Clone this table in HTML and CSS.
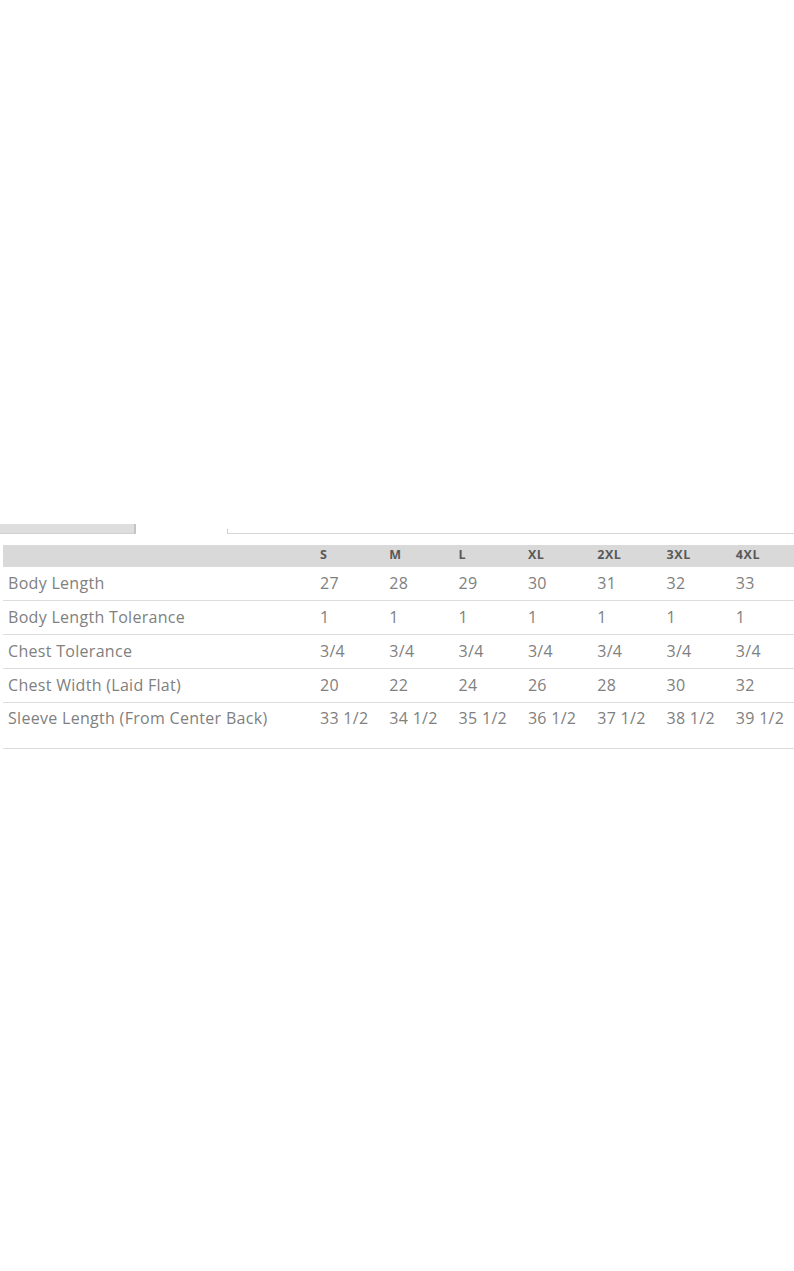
FILE: index.html
```html
<!DOCTYPE html>
<html>
<head>
<meta charset="utf-8">
<link rel="stylesheet" href="styles.css">
</head>
<body>
<div class="page">
  <div class="tabs">
    <div class="tab-active"></div>
    <div class="tab-gap"></div>
    <div class="tab-line"></div>
  </div>
  <div class="chart">
    <div class="row head">
      <div class="label"></div>
      <div class="cell">S</div><div class="cell">M</div><div class="cell">L</div><div class="cell">XL</div><div class="cell">2XL</div><div class="cell">3XL</div><div class="cell">4XL</div>
    </div>
    <div class="row">
      <div class="label">Body Length</div>
      <div class="cell">27</div><div class="cell">28</div><div class="cell">29</div><div class="cell">30</div><div class="cell">31</div><div class="cell">32</div><div class="cell">33</div>
    </div>
    <div class="row">
      <div class="label">Body Length Tolerance</div>
      <div class="cell">1</div><div class="cell">1</div><div class="cell">1</div><div class="cell">1</div><div class="cell">1</div><div class="cell">1</div><div class="cell">1</div>
    </div>
    <div class="row">
      <div class="label">Chest Tolerance</div>
      <div class="cell">3/4</div><div class="cell">3/4</div><div class="cell">3/4</div><div class="cell">3/4</div><div class="cell">3/4</div><div class="cell">3/4</div><div class="cell">3/4</div>
    </div>
    <div class="row">
      <div class="label">Chest Width (Laid Flat)</div>
      <div class="cell">20</div><div class="cell">22</div><div class="cell">24</div><div class="cell">26</div><div class="cell">28</div><div class="cell">30</div><div class="cell">32</div>
    </div>
    <div class="row last">
      <div class="label">Sleeve Length (From Center Back)</div>
      <div class="cell">33 1/2</div><div class="cell">34 1/2</div><div class="cell">35 1/2</div><div class="cell">36 1/2</div><div class="cell">37 1/2</div><div class="cell">38 1/2</div><div class="cell">39 1/2</div>
    </div>
  </div>
</div>
</body>
</html>
```
FILE: styles.css
```css
html, body {
  margin: 0;
  padding: 0;
  background: #ffffff;
}
.page {
  width: 794px;
  height: 1271px;
  padding-top: 522px;
  box-sizing: border-box;
  font-family: "Open Sans", "Liberation Sans", sans-serif;
}
.tabs {
  display: flex;
  align-items: flex-end;
  height: 12px;
}
.tab-active {
  width: 136px;
  height: 10px;
  background: #dedede;
  border-bottom: 1px solid #cfcfcf;
  border-right: 2px solid #c4c4c4;
  box-sizing: border-box;
}
.tab-gap {
  width: 91px;
}
.tab-line {
  flex: 1;
  height: 5px;
  border-left: 1px solid #cdcdcd;
  border-bottom: 1px solid #d6d6d6;
  box-sizing: border-box;
}
.chart {
  margin-top: 11px;
  margin-left: 3px;
  border-bottom: 1px solid #dcdcdc;
}
.row {
  display: grid;
  grid-template-columns: 317px repeat(6, 69.3px) 1fr;
  align-items: center;
  height: 34px;
  border-bottom: 1px solid #dcdcdc;
  box-sizing: border-box;
  color: #808080;
  font-size: 16px;
  letter-spacing: 0.3px;
  padding-bottom: 2px;
}
.row.head {
  height: 22px;
  background: #d9d9d9;
  border-bottom: none;
  color: #595959;
  font-size: 12.5px;
  letter-spacing: 0.6px;
  font-weight: 700;
  padding-bottom: 3px;
}
.row.last {
  height: 45px;
  border-bottom: none;
  align-items: start;
  padding-top: 4px;
}
.label {
  padding-left: 5px;
  white-space: nowrap;
}
.cell {
  white-space: nowrap;
}
```
